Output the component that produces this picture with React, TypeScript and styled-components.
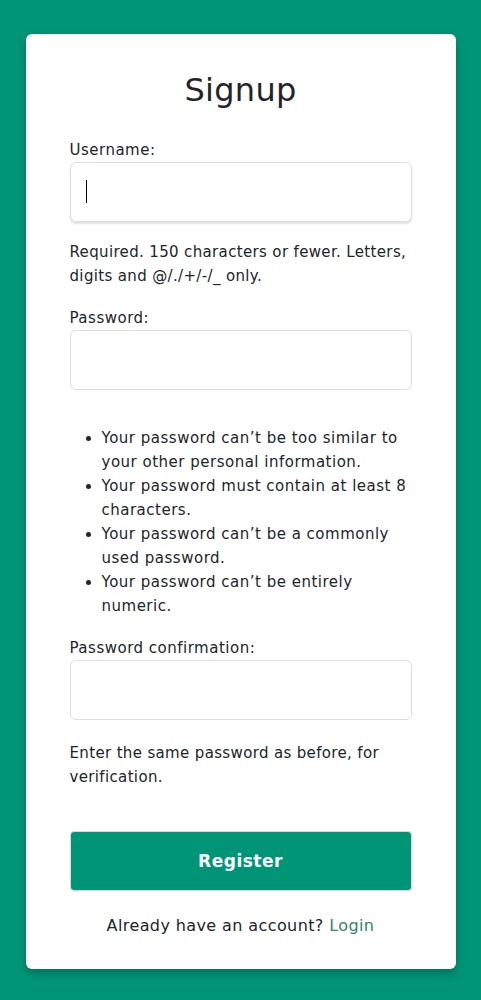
import React from 'react'
import styled, { createGlobalStyle } from 'styled-components'

const GlobalStyle = createGlobalStyle`
  html, body {
    margin: 0;
    padding: 0;
    background: #009577;
  }
  body {
    font-family: 'DejaVu Sans', 'Liberation Sans', sans-serif;
    color: #212529;
    letter-spacing: 0.5px;
  }
`

const helpLines = [
  'Your password can’t be too similar to your other personal information.',
  'Your password must contain at least 8 characters.',
  'Your password can’t be a commonly used password.',
  'Your password can’t be entirely numeric.',
]

export default function App() {
  return (
    <>
      <GlobalStyle />
      <Page>
        <Card>
          <Title>Signup</Title>
          <Form onSubmit={(e) => e.preventDefault()}>
            <Field>
              <Label htmlFor="id_username">Username:</Label>
              <InputWrap>
                <Input id="id_username" type="text" $focused />
                <Caret />
              </InputWrap>
              <HelpText>Required. 150 characters or fewer. Letters, digits and @/./+/-/_ only.</HelpText>
            </Field>

            <Field>
              <Label htmlFor="id_password1">Password:</Label>
              <Input id="id_password1" type="password" />
              <HelpList>
                {helpLines.map((line) => (
                  <li key={line}>{line}</li>
                ))}
              </HelpList>
            </Field>

            <Field>
              <Label htmlFor="id_password2">Password confirmation:</Label>
              <Input id="id_password2" type="password" />
              <HelpText $gap={21}>Enter the same password as before, for verification.</HelpText>
            </Field>

            <SubmitButton type="submit">Register</SubmitButton>
          </Form>
          <Footer>
            Already have an account? <LoginLink href="#">Login</LoginLink>
          </Footer>
        </Card>
      </Page>
    </>
  )
}

const Page = styled.div`
  min-height: 1000px;
  padding: 34px 0 32px;
  box-sizing: border-box;
`

const Card = styled.div`
  width: 430px;
  margin: 0 auto;
  background: #fff;
  border-radius: 6px;
  box-shadow: 0 4px 10px rgba(0, 0, 0, 0.25);
  padding: 36px 44px 31px;
  box-sizing: border-box;
`

const Title = styled.h2`
  margin: 0 0 28px;
  text-align: center;
  font-size: 32px;
  font-weight: 400;
  line-height: 40px;
  letter-spacing: 0.3px;
  color: #212529;
`

const Form = styled.form`
  display: flex;
  flex-direction: column;
`

const Field = styled.div`
  display: flex;
  flex-direction: column;
  margin-bottom: 18px;
`

const Label = styled.label`
  font-size: 15px;
  line-height: 24px;
  color: #212529;
`

const InputWrap = styled.div`
  position: relative;
`

const Input = styled.input<{ $focused?: boolean }>`
  width: 100%;
  height: 60px;
  box-sizing: border-box;
  border: 1px solid #dedede;
  border-radius: 6px;
  padding: 0 15px;
  font-size: 16px;
  outline: none;
  background: #fff;
  box-shadow: ${(p) => (p.$focused ? '0 2px 2px rgba(0, 0, 0, 0.12)' : 'none')};
`

const Caret = styled.span`
  position: absolute;
  left: 16px;
  top: 18px;
  width: 1px;
  height: 23px;
  background: #000;
`

const HelpText = styled.div<{ $gap?: number }>`
  margin-top: ${(p) => p.$gap ?? 18}px;
  font-size: 15px;
  line-height: 24px;
  letter-spacing: 0.35px;
  color: #212529;
`

const HelpList = styled.ul`
  margin: 36px 0 0;
  padding-left: 32px;
  font-size: 15px;
  line-height: 24px;
  color: #212529;
`

const SubmitButton = styled.button`
  margin-top: 24px;
  height: 60px;
  border: 1px solid #d8d8d8;
  border-radius: 4px;
  background: #009577;
  color: #fff;
  font-family: inherit;
  font-size: 17px;
  font-weight: 600;
  letter-spacing: 0.5px;
  cursor: pointer;
`

const Footer = styled.p`
  margin: 23px 0 0;
  text-align: center;
  font-size: 16px;
  line-height: 24px;
  letter-spacing: 0.4px;
  color: #212529;
`

const LoginLink = styled.a`
  color: #35826d;
  text-decoration: none;
`
